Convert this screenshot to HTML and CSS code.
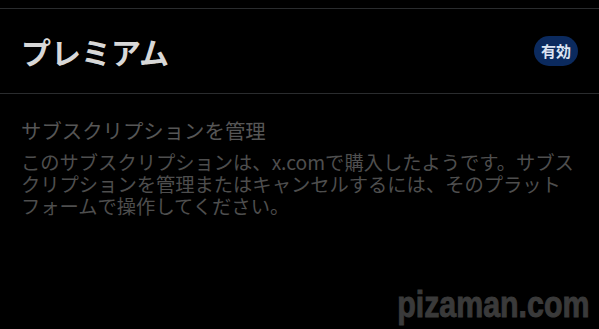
FILE: index.html
```html
<!DOCTYPE html>
<html lang="ja">
<head>
<meta charset="utf-8">
<link rel="stylesheet" href="styles.css">
</head>
<body>
<div class="page">
  <div class="top-strip"></div>
  <header class="plan">
    <h1 class="plan-title">プレミアム</h1>
    <span class="badge">有効</span>
  </header>
  <section class="manage">
    <h2 class="manage-title">サブスクリプションを管理</h2>
    <p class="manage-text">このサブスクリプションは、x.comで購入したようです。サブス<br>クリプションを管理またはキャンセルするには、そのプラット<br>フォームで操作してください。</p>
  </section>
  <div class="watermark">pizaman.com</div>
</div>
</body>
</html>
```
FILE: styles.css
```css
html, body {
  margin: 0;
  padding: 0;
  background: #000;
}
body {
  font-family: "Noto Sans CJK JP", "Noto Sans", sans-serif;
  width: 599px;
  height: 329px;
  overflow: hidden;
}
.page {
  position: relative;
  width: 599px;
  height: 329px;
  background: #000;
}
.top-strip {
  height: 8px;
  border-bottom: 1px solid #2a2c2e;
}
.plan {
  display: flex;
  align-items: center;
  justify-content: space-between;
  height: 84px;
  padding: 0 21px 0 21px;
  border-bottom: 1px solid #2a2c2e;
}
.plan-title {
  margin: 0;
  font-size: 30px;
  font-weight: 700;
  line-height: 40px;
  color: #d8d8d8;
}
.badge {
  display: inline-flex;
  align-items: center;
  height: 30px;
  padding: 0 7px;
  border-radius: 15px;
  background: #0b2a5e;
  color: #dbe4f3;
  font-size: 15px;
  font-weight: 700;
  line-height: 30px;
}
.manage {
  padding: 23px 10px 0 21px;
}
.manage-title {
  margin: 0;
  font-size: 20.4px;
  font-weight: 400;
  line-height: 26px;
  color: #565656;
}
.manage-text {
  margin: 8px 0 0 0;
  font-size: 19.3px;
  line-height: 22px;
  color: #4e4e4e;
}
.watermark {
  position: absolute;
  right: 10px;
  bottom: 4px;
  font-family: "Liberation Sans", "Arial", sans-serif;
  font-weight: 700;
  font-size: 37px;
  line-height: 40px;
  color: #3a3a3a;
  -webkit-text-stroke: 1px #3a3a3a;
  transform: scaleX(0.82);
  transform-origin: right center;
}
```
